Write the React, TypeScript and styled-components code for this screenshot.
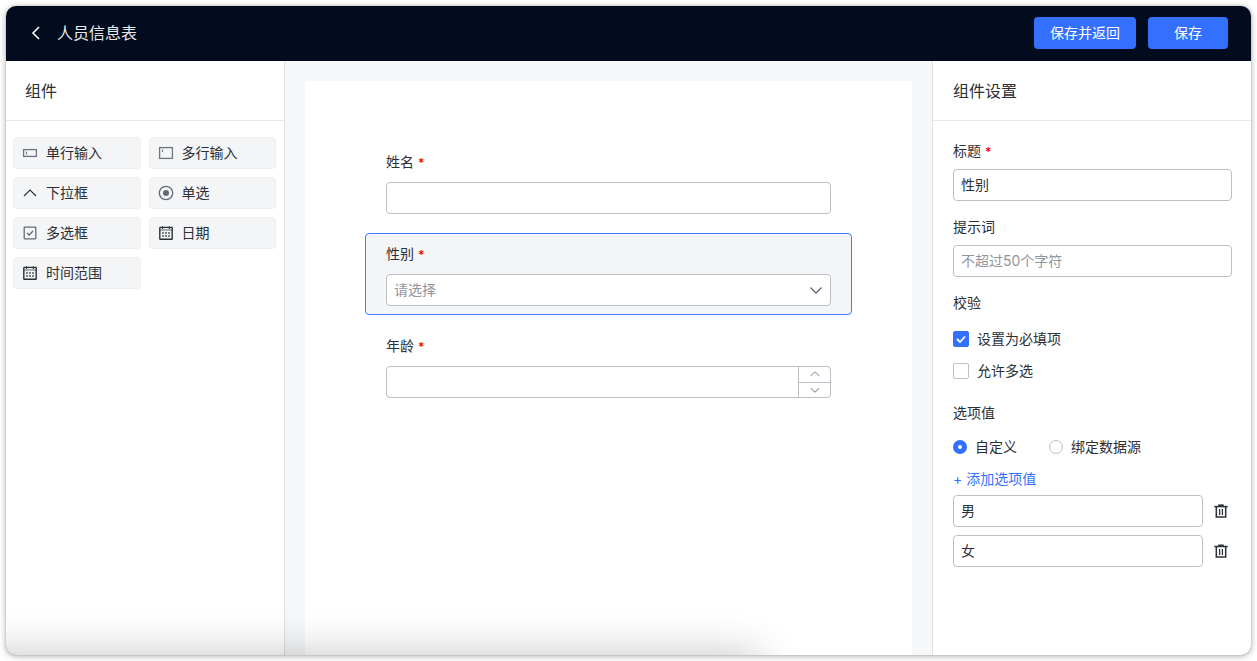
import React, { useState } from "react";
import styled, { createGlobalStyle, css } from "styled-components";

const GlobalStyle = createGlobalStyle`
  * { box-sizing: border-box; }
  body { margin: 0; background: #fff; }
  body, button, input, select {
    font-family: Inter, "Noto Sans CJK SC", sans-serif;
    font-size: 14px;
    line-height: 20px;
    color: #2b2f36;
  }
`;

const Page = styled.div`
  display: flex;
  min-height: 100vh;
  padding: 6px;
`;

const Window = styled.div`
  position: relative;
  display: flex;
  flex-direction: column;
  flex: 1;
  min-width: 0;
  overflow: hidden;
  border-radius: 10px;
  background: #fff;
  box-shadow: 0 0 1px rgba(0, 0, 0, 0.3), 0 1px 6px rgba(0, 0, 0, 0.35);
`;

const FloorShadow = styled.div`
  position: absolute;
  top: 100%;
  left: -80px;
  width: 67%;
  height: 80px;
  border-radius: 10px;
  box-shadow: 0 0 44px rgba(0, 0, 0, 0.24);
  pointer-events: none;
`;

const Header = styled.header`
  display: flex;
  align-items: center;
  gap: 12px;
  height: 55px;
  flex: none;
  padding: 0 23px 1px;
  background: #030c1e;
`;

const HeaderTitle = styled.h1`
  flex: 1;
  margin: 0;
  font-size: 16px;
  font-weight: 400;
  line-height: 24px;
  color: #e6e8eb;
`;

const IconButton = styled.button`
  display: inline-flex;
  align-items: center;
  justify-content: center;
  padding: 0;
  border: 0;
  background: none;
  color: inherit;
  cursor: pointer;
`;

const BackButton = styled(IconButton)`
  width: 16px;
  height: 24px;
  color: #fff;
`;

const PrimaryButton = styled.button`
  height: 32px;
  min-width: 80px;
  padding: 0 16px;
  border: 0;
  border-radius: 4px;
  background: #3370ff;
  color: #fff;
  cursor: pointer;
`;

const Body = styled.div`
  display: flex;
  flex: 1;
`;

const PanelTitle = styled.h2`
  display: flex;
  align-items: center;
  height: 60px;
  margin: 0;
  padding: 0 20px;
  border-bottom: 1px solid #e4e6e9;
  font-size: 16px;
  font-weight: 400;
  line-height: 24px;
`;

const Sidebar = styled.aside`
  width: 279px;
  flex: none;
  border-right: 1px solid #dee0e3;
  ${PanelTitle} { padding-left: 19px; }
`;

const Settings = styled.aside`
  width: 319px;
  flex: none;
  border-left: 1px solid #dee0e3;
`;

const Palette = styled.div`
  display: grid;
  grid-template-columns: 1fr 1fr;
  gap: 8px;
  padding: 16px 8px 16px 7px;
`;

const Tile = styled.button`
  display: flex;
  align-items: center;
  gap: 8px;
  height: 32px;
  padding: 0 8px;
  border: 1px solid #eceeef;
  border-radius: 4px;
  background: #f4f5f7;
  cursor: grab;
`;

const Canvas = styled.main`
  display: flex;
  flex: 1;
  min-width: 0;
  padding: 20px 20px 0;
  background: #f6f7f9;
`;

const Paper = styled.form`
  display: flex;
  flex-direction: column;
  gap: 10px;
  flex: 1;
  min-width: 0;
  padding: 60px;
  background: #fff;
`;

const Block = styled.div<{ $selected?: boolean }>`
  padding: 8px 20px;
  border: 1px solid transparent;
  border-radius: 4px;
  ${(p) =>
    p.$selected &&
    css`
      border-color: #3f7aff;
      background: #f4f5f7;
    `}
`;

const BlockLabel = styled.label`
  display: block;
  margin-bottom: 8px;
  line-height: 24px;
`;

const Required = styled.span`
  margin-left: 4px;
  font-size: 12px;
  font-weight: 600;
  line-height: 12px;
  color: #f00;
`;

const fieldBox = css`
  height: 32px;
  border: 1px solid #bbbfc6;
  border-radius: 4px;
  background: #fff;
`;

const TextInput = styled.input`
  ${fieldBox}
  display: block;
  width: 100%;
  min-width: 0;
  padding: 0 7px 2px;
  &::placeholder { color: #8f959e; opacity: 1; }
`;

const SelectWrap = styled.div`
  ${fieldBox}
  display: grid;
  align-items: center;
  color: #646a73;
  > * { grid-area: 1 / 1; }
  > svg { justify-self: end; margin-right: 6px; pointer-events: none; }
`;

const Select = styled.select`
  appearance: none;
  width: 100%;
  height: 30px;
  padding: 0 7px;
  border: 0;
  background: transparent;
  color: #8f959e;
`;

const NumberWrap = styled.div`
  ${fieldBox}
  display: flex;
  overflow: hidden;
`;

const NumberInput = styled.input`
  flex: 1;
  min-width: 0;
  padding: 0 7px;
  border: 0;
  background: none;
  appearance: textfield;
  &::-webkit-inner-spin-button { appearance: none; }
`;

const Steppers = styled.div`
  display: flex;
  flex-direction: column;
  width: 32px;
  border-left: 1px solid #bbbfc6;
  color: #646a73;
`;

const Step = styled(IconButton)`
  flex: 1;
  &:first-child { border-bottom: 1px solid #bbbfc6; }
`;

const SettingsBody = styled.div`
  display: flex;
  flex-direction: column;
  gap: 16px;
  padding: 20px 19px 20px 20px;
`;

const Field = styled.div`
  display: flex;
  flex-direction: column;
  gap: 8px;
`;

const FieldLabel = styled.label`
  line-height: 20px;
`;

const GroupLabel = styled.div`
  line-height: 20px;
`;

const CheckList = styled.div`
  padding-top: 2px;
`;

const Choice = styled.label`
  display: flex;
  align-items: center;
  gap: 8px;
  height: 32px;
`;

const CheckMark = styled.span`
  display: grid;
  width: 16px;
  height: 16px;
  > * { grid-area: 1 / 1; }
  > svg { pointer-events: none; color: #fff; }
`;

const Checkbox = styled.input`
  appearance: none;
  width: 16px;
  height: 16px;
  margin: 0;
  border: 1px solid #bbbfc6;
  border-radius: 2px;
  background: #fff;
  &:checked { border-color: #3370ff; background: #3370ff; }
`;

const Radio = styled.input`
  appearance: none;
  width: 14px;
  height: 14px;
  margin: 0;
  border: 1px solid #bbbfc6;
  border-radius: 50%;
  background: #fff;
  &:checked { border: 5px solid #3370ff; }
`;

const RadioRow = styled.div`
  display: flex;
  gap: 32px;
`;

const AddButton = styled.button`
  display: block;
  height: 32px;
  padding: 0;
  border: 0;
  background: none;
  color: #3370ff;
  cursor: pointer;
`;

const OptionList = styled.div`
  display: flex;
  flex-direction: column;
  gap: 8px;
`;

const OptionRow = styled.div`
  display: flex;
  align-items: center;
  gap: 10px;
  padding-right: 3px;
`;

const Svg = ({ size = 16, children }: { size?: number; children: React.ReactNode }) => (
  <svg
    width={size}
    height={size}
    viewBox="0 0 16 16"
    fill="none"
    stroke="currentColor"
    strokeWidth="1.3"
    aria-hidden="true"
  >
    {children}
  </svg>
);

const LineIcon = () => (
  <Svg>
    <g stroke="#70757f">
      <rect x="1.6" y="4.6" width="12.8" height="6.8" />
      <path d="M4.5 6.5v3" strokeWidth="1" />
    </g>
  </Svg>
);

const AreaIcon = () => (
  <Svg>
    <g stroke="#70757f">
      <rect x="1.6" y="2.6" width="12.8" height="10.8" />
      <path d="M4.5 4.5v2.5" strokeWidth="1" />
    </g>
  </Svg>
);

const ChevronUp = ({ size }: { size?: number }) => (
  <Svg size={size}>
    <path d="M2 11l6-6 6 6" strokeWidth="1.1" />
  </Svg>
);

const ChevronDown = ({ size }: { size?: number }) => (
  <Svg size={size}>
    <path d="M2.5 5.5L8 11l5.5-5.5" />
  </Svg>
);

const RadioIcon = () => (
  <Svg>
    <circle cx="8" cy="8" r="6.7" stroke="#646a73" />
    <circle cx="8" cy="8" r="3" fill="#646a73" stroke="none" />
  </Svg>
);

const CheckIcon = () => (
  <Svg>
    <g stroke="#646a73">
      <rect x="2.2" y="2.2" width="11.6" height="11.6" rx="0.5" />
      <path d="M5 8l2.2 2L11 6" />
    </g>
  </Svg>
);

const CalendarIcon = () => (
  <Svg>
    <rect x="1.8" y="2.4" width="12.4" height="11.8" rx="0.5" strokeWidth="1.4" />
    <path d="M2 5h12" strokeWidth="0.7" />
    <path d="M4.6 1.4v2.6M11.4 1.4v2.6" strokeWidth="1.2" />
    <path
      d="M4.2 8h1.6M7.2 8h1.6M10.2 8h1.6M4.2 11h1.6M7.2 11h1.6M10.2 11h1.6"
      strokeWidth="1.6"
    />
  </Svg>
);

const TrashIcon = () => (
  <Svg>
    <path d="M1.3 3.6h13.4" strokeWidth="1.5" />
    <path d="M5.2 2.2h5.6" strokeWidth="1.6" />
    <path d="M3.3 4v10h9.4V4" strokeWidth="1.5" />
    <path d="M6.6 6v6M9.4 6v6" strokeWidth="1.3" />
  </Svg>
);

const tiles = [
  { name: "单行输入", icon: <LineIcon /> },
  { name: "多行输入", icon: <AreaIcon /> },
  { name: "下拉框", icon: <ChevronUp /> },
  { name: "单选", icon: <RadioIcon /> },
  { name: "多选框", icon: <CheckIcon /> },
  { name: "日期", icon: <CalendarIcon /> },
  { name: "时间范围", icon: <CalendarIcon /> },
];

const CheckChoice = ({ text, initial = false }: { text: string; initial?: boolean }) => {
  const [on, setOn] = useState(initial);
  return (
    <Choice>
      <CheckMark>
        <Checkbox type="checkbox" checked={on} onChange={() => setOn(!on)} />
        {on && (
          <Svg>
            <path d="M4 8l3 3 5-5.5" strokeWidth="1.8" />
          </Svg>
        )}
      </CheckMark>
      {text}
    </Choice>
  );
};

export default function App() {
  const [options, setOptions] = useState(["男", "女"]);
  const [age, setAge] = useState("");
  const step = (by: number) => setAge(String(Number(age) + by));

  return (
    <>
      <GlobalStyle />
      <Page>
        <Window>
          <Header>
            <BackButton type="button" aria-label="返回">
              <Svg>
                <path d="M10 2L4 8l6 6" strokeWidth="1.6" />
              </Svg>
            </BackButton>
            <HeaderTitle>人员信息表</HeaderTitle>
            <PrimaryButton type="button">保存并返回</PrimaryButton>
            <PrimaryButton type="button">保存</PrimaryButton>
          </Header>
          <Body>
            <Sidebar>
              <PanelTitle>组件</PanelTitle>
              <Palette>
                {tiles.map((t) => (
                  <Tile key={t.name} type="button">
                    {t.icon}
                    {t.name}
                  </Tile>
                ))}
              </Palette>
            </Sidebar>
            <Canvas>
              <Paper>
                <Block>
                  <BlockLabel htmlFor="name">
                    姓名<Required>*</Required>
                  </BlockLabel>
                  <TextInput id="name" />
                </Block>
                <Block $selected>
                  <BlockLabel htmlFor="gender">
                    性别<Required>*</Required>
                  </BlockLabel>
                  <SelectWrap>
                    <Select id="gender" defaultValue="">
                      <option value="">请选择</option>
                      {options.map((o, i) => (
                        <option key={i}>{o}</option>
                      ))}
                    </Select>
                    <ChevronDown />
                  </SelectWrap>
                </Block>
                <Block>
                  <BlockLabel htmlFor="age">
                    年龄<Required>*</Required>
                  </BlockLabel>
                  <NumberWrap>
                    <NumberInput
                      id="age"
                      type="number"
                      value={age}
                      onChange={(e) => setAge(e.target.value)}
                    />
                    <Steppers>
                      <Step type="button" aria-label="增加" onClick={() => step(1)}>
                        <ChevronUp size={12} />
                      </Step>
                      <Step type="button" aria-label="减少" onClick={() => step(-1)}>
                        <ChevronDown size={12} />
                      </Step>
                    </Steppers>
                  </NumberWrap>
                </Block>
              </Paper>
            </Canvas>
            <Settings>
              <PanelTitle>组件设置</PanelTitle>
              <SettingsBody>
                <Field>
                  <FieldLabel htmlFor="title">
                    标题<Required>*</Required>
                  </FieldLabel>
                  <TextInput id="title" defaultValue="性别" />
                </Field>
                <Field>
                  <FieldLabel htmlFor="hint">提示词</FieldLabel>
                  <TextInput id="hint" placeholder="不超过50个字符" />
                </Field>
                <Field role="group" aria-labelledby="rules">
                  <GroupLabel id="rules">校验</GroupLabel>
                  <CheckList>
                    <CheckChoice text="设置为必填项" initial />
                    <CheckChoice text="允许多选" />
                  </CheckList>
                </Field>
                <Field role="group" aria-labelledby="values">
                  <GroupLabel id="values">选项值</GroupLabel>
                  <div>
                    <RadioRow>
                      <Choice>
                        <Radio type="radio" name="source" defaultChecked />
                        自定义
                      </Choice>
                      <Choice>
                        <Radio type="radio" name="source" />
                        绑定数据源
                      </Choice>
                    </RadioRow>
                    <AddButton type="button" onClick={() => setOptions([...options, ""])}>
                      + 添加选项值
                    </AddButton>
                    <OptionList>
                      {options.map((o, i) => (
                        <OptionRow key={i}>
                          <TextInput
                            aria-label={`选项 ${i + 1}`}
                            value={o}
                            onChange={(e) =>
                              setOptions(options.map((v, j) => (j === i ? e.target.value : v)))
                            }
                          />
                          <IconButton
                            type="button"
                            aria-label="删除"
                            onClick={() => setOptions(options.filter((_, j) => j !== i))}
                          >
                            <TrashIcon />
                          </IconButton>
                        </OptionRow>
                      ))}
                    </OptionList>
                  </div>
                </Field>
              </SettingsBody>
            </Settings>
          </Body>
          <FloorShadow />
        </Window>
      </Page>
    </>
  );
}
